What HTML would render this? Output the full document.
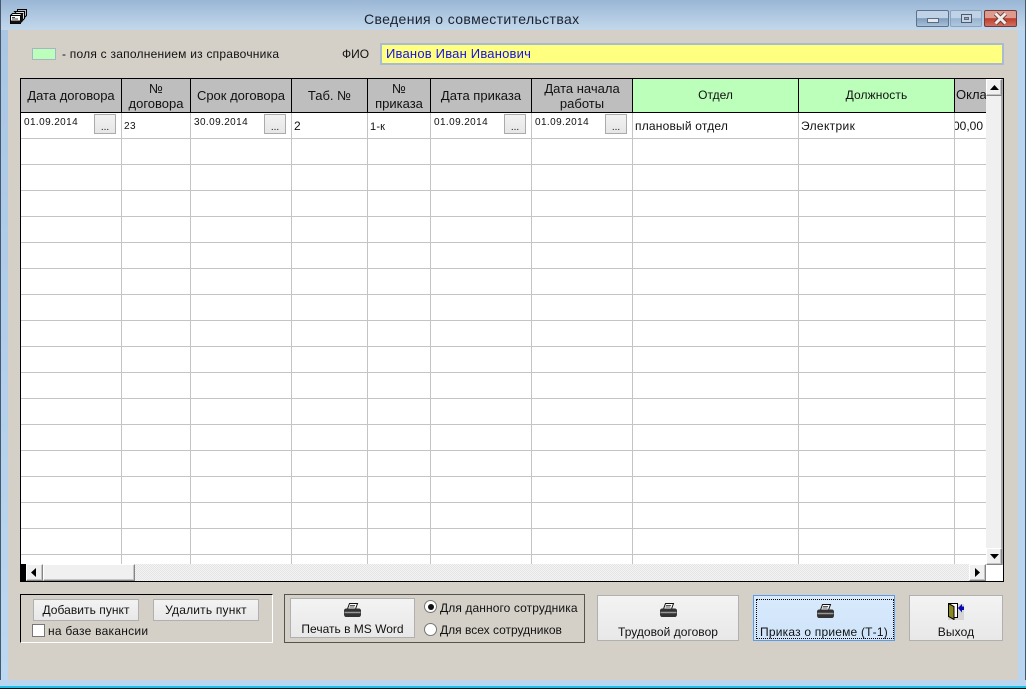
<!DOCTYPE html>
<html><head><meta charset="utf-8"><style>
html,body{margin:0;padding:0;background:#000}
#w{position:relative;width:1026px;height:689px;overflow:hidden;font-family:"Liberation Sans","Noto Sans CJK SC",sans-serif;font-size:12px;color:#111;background:#b9d3ec}
#w div,#w svg{position:absolute;box-sizing:border-box}
.t{white-space:nowrap;line-height:14px}
.h{background:#bebebe;border-right:1px solid #000;top:79px;height:34px;border-bottom:1px solid #000;text-align:center;line-height:14px;font-size:13px}
.g{background:#bbffbb;font-size:12px}
.vl{top:113px;height:451px;width:1px;background:#c4c4c4}
.hl{left:21px;width:965px;height:1px;background:#c4c4c4}
.btn{background:linear-gradient(#f3f3f3,#e8e8e8);border:1px solid #b0b0b0;text-align:center}
.d{font-size:10px;line-height:12px;white-space:nowrap;letter-spacing:.4px}
.dot{width:22px;height:20px;top:114px;background:linear-gradient(#f2f2f2,#e6e6e6);border:1px solid #ababab;text-align:center;font-size:10px;line-height:25px}
.sb{background:#f0f0f0;border:1px solid;border-color:#fff #858585 #858585 #fff;box-shadow:inset -1px -1px 0 #c4c4c4}
</style></head><body><div id="w">
<div style="left:0;top:0;width:1026px;height:30px;background:linear-gradient(#9ab6d6,#b3cbe3 60%,#c3d7ea)"></div>
<div style="left:0;top:30px;width:8px;height:656px;background:linear-gradient(#a9c6e4,#bcd8f2)"></div>
<div style="left:0;top:0;width:1px;height:689px;background:#45586c"></div>
<div style="left:1018px;top:30px;width:8px;height:656px;background:#b9d5ef"></div>
<div style="left:1025px;top:0;width:1px;height:689px;background:#45586c"></div>
<div style="left:0;top:680px;width:1026px;height:6px;background:#b9d5ef"></div>
<div style="left:0;top:686px;width:1026px;height:2px;background:#1cc0e8"></div>
<div style="left:0;top:688px;width:1026px;height:1px;background:#111"></div>
<div style="left:8px;top:30px;width:1010px;height:650px;background:#d4d0c8"></div>

<svg style="left:10px;top:9px" width="17" height="15" viewBox="0 0 17 15"><path d="M7.500 .5h9v6l-2 2V2.500h-7z" fill="#bbb" stroke="#000"/><path d="M4.500 2.500h10v7l-2 2z" fill="#ddd" stroke="#000"/><path d="M2.500 4.500h10l-2 2H.5z" fill="#eee" stroke="#000"/><rect x=".5" y="6.500" width="10" height="8" fill="#fff" stroke="#000"/><path d="M2 8.500h3M2 10h6" stroke="#444"/><rect x="1" y="11.500" width="10" height="3" fill="#111"/><path d="M10.500 6.500l2.500-2.500v8l-2.500 2.500z" fill="#111"/></svg>
<div class="t" style="left:364px;top:11px;font-size:14px;line-height:16px;color:#1a2230;letter-spacing:.38px">Сведения о совместительствах</div>

<div style="left:916px;top:10px;width:33px;height:17px;border:1px solid #5b728e;border-radius:2px;background:linear-gradient(#c0d2e6 45%,#7f9cbd 50%,#a8c0d8)"></div>
<div style="left:927px;top:18px;width:12px;height:5px;background:#e4e8ee;border:1px solid #5a6a80"></div>
<div style="left:950px;top:10px;width:32px;height:17px;border:1px solid #8ba3bf;border-radius:2px;background:linear-gradient(#bfd2e6 45%,#98b3d0 50%,#b0c8de)"></div>
<div style="left:961px;top:14px;width:11px;height:9px;background:#c8d4e2;border:1px solid #4c5c70"></div>
<div style="left:964px;top:17px;width:5px;height:3px;background:#8fa4bc;border:1px solid #5a6a80"></div>
<div style="left:984px;top:10px;width:33px;height:17px;border:1px solid #6e3a3a;border-radius:2px;background:linear-gradient(#df9a8e 45%,#be3c2c 50%,#cf7060)"></div>
<svg style="left:993px;top:12px" width="15" height="13" viewBox="0 0 15 13"><path d="M2.500 1.500l10 10M12.500 1.500l-10 10" stroke="#5c3030" stroke-width="4.500"/><path d="M2.500 1.500l10 10M12.500 1.500l-10 10" stroke="#f1ece8" stroke-width="3"/></svg>

<div style="left:32px;top:48px;width:24px;height:12px;background:#bbffbb;border:1px solid #a7b4c6"></div>
<div class="t" style="left:62px;top:47px;letter-spacing:.23px">- поля с заполнением из справочника</div>
<div class="t" style="left:342px;top:47px">ФИО</div>
<div class="t" style="left:380px;top:43px;width:624px;height:22px;background:#ffff80;border:2px solid #a9bbd0;color:#1414e6;padding-left:4px;line-height:17px;font-size:13px;letter-spacing:.2px">Иванов Иван Иванович</div>

<div style="left:20px;top:78px;width:984px;height:504px;background:#fff;border:1px solid #000"></div>
<div style="left:21px;width:101px" class="h"><div style="left:0;width:100px;top:10px">Дата договора</div></div>
<div style="left:122px;width:69px" class="h"><div style="left:0;width:68px;top:3px">№</div><div style="left:0;width:68px;top:18px">договора</div></div>
<div style="left:191px;width:101px" class="h"><div style="left:0;width:100px;top:10px">Срок договора</div></div>
<div style="left:292px;width:76px" class="h"><div style="left:0;width:75px;top:10px">Таб. №</div></div>
<div style="left:368px;width:63px" class="h"><div style="left:0;width:62px;top:3px">№</div><div style="left:0;width:62px;top:18px">приказа</div></div>
<div style="left:431px;width:101px" class="h"><div style="left:0;width:100px;top:10px">Дата приказа</div></div>
<div style="left:532px;width:101px" class="h"><div style="left:0;width:100px;top:3px">Дата начала</div><div style="left:0;width:100px;top:18px">работы</div></div>
<div style="left:633px;width:166px" class="h g"><div style="left:0;width:165px;top:9px">Отдел</div></div>
<div style="left:799px;width:156px" class="h g"><div style="left:0;width:155px;top:9px;letter-spacing:.1px">Должность</div></div>
<div style="left:955px;width:32px;text-align:left;overflow:hidden" class="h"><div style="left:1px;top:9px">Оклад</div></div>

<div class="vl" style="left:121px"></div><div class="vl" style="left:190px"></div><div class="vl" style="left:291px"></div><div class="vl" style="left:367px"></div><div class="vl" style="left:430px"></div><div class="vl" style="left:531px"></div><div class="vl" style="left:632px"></div><div class="vl" style="left:798px"></div><div class="vl" style="left:954px"></div>
<div class="hl" style="top:138px"></div><div class="hl" style="top:164px"></div><div class="hl" style="top:190px"></div><div class="hl" style="top:216px"></div><div class="hl" style="top:242px"></div><div class="hl" style="top:268px"></div><div class="hl" style="top:294px"></div><div class="hl" style="top:320px"></div><div class="hl" style="top:346px"></div><div class="hl" style="top:372px"></div><div class="hl" style="top:398px"></div><div class="hl" style="top:424px"></div><div class="hl" style="top:450px"></div><div class="hl" style="top:476px"></div><div class="hl" style="top:502px"></div><div class="hl" style="top:528px"></div><div class="hl" style="top:554px"></div>

<div class="d" style="left:24px;top:117px">01.09.2014</div><div class="dot" style="left:94px">...</div>
<div class="d" style="left:124px;top:121px;letter-spacing:.5px">23</div>
<div class="d" style="left:194px;top:117px">30.09.2014</div><div class="dot" style="left:264px">...</div>
<div class="t" style="left:294px;top:119px;font-size:12px">2</div>
<div class="d" style="left:370px;top:121px;font-size:11px;letter-spacing:.2px">1-к</div>
<div class="d" style="left:434px;top:117px">01.09.2014</div><div class="dot" style="left:504px">...</div>
<div class="d" style="left:535px;top:117px">01.09.2014</div><div class="dot" style="left:605px">...</div>
<div class="t" style="left:635px;top:119px;letter-spacing:.2px">плановый отдел</div>
<div class="t" style="left:801px;top:119px;letter-spacing:.35px">Электрик</div>
<div style="left:955px;top:119px;width:31px;height:14px;overflow:hidden"><div class="t" style="right:3px;top:0">100,00</div></div>

<div style="left:986px;top:79px;width:15px;height:477px;background:#f0f0f0"></div>
<div style="left:1001px;top:79px;width:2px;height:486px;background:#a8a8a8"></div>
<div class="sb" style="left:986px;top:79px;width:16px;height:17px"></div>
<svg style="left:990px;top:85px" width="9" height="5"><path d="M4.500 0L9 5H0z" fill="#000"/></svg>
<div class="sb" style="left:986px;top:548px;width:16px;height:17px"></div>
<svg style="left:990px;top:554px" width="9" height="5"><path d="M0 0h9L4.500 5z" fill="#000"/></svg>

<div style="left:21px;top:564px;width:5px;height:17px;background:#000"></div>
<div style="left:26px;top:564px;width:960px;height:17px;background:repeating-conic-gradient(#f4f4f4 0 25%,#e4e4e4 0 50%) 0 0/2px 2px"></div>
<div class="sb" style="left:26px;top:564px;width:17px;height:17px"></div>
<svg style="left:31px;top:568px" width="5" height="9"><path d="M5 0v9L0 4.500z" fill="#000"/></svg>
<div class="sb" style="left:43px;top:564px;width:92px;height:17px"></div>
<div class="sb" style="left:969px;top:564px;width:17px;height:17px"></div>
<svg style="left:975px;top:568px" width="5" height="9"><path d="M0 0l5 4.500L0 9z" fill="#000"/></svg>

<div style="left:20px;top:594px;width:253px;height:49px;border:1px solid;border-color:#000 #fff #fff #000"></div>
<div class="btn t" style="left:33px;top:599px;width:106px;height:22px;line-height:21px;letter-spacing:.05px">Добавить пункт</div>
<div class="btn t" style="left:153px;top:599px;width:106px;height:22px;line-height:21px;letter-spacing:.2px">Удалить пункт</div>
<div style="left:32px;top:624px;width:13px;height:13px;background:#fff;border:1px solid #777"></div>
<div class="t" style="left:48px;top:624px;letter-spacing:.25px">на базе вакансии</div>

<div style="left:284px;top:594px;width:301px;height:49px;border:1px solid #55534e"></div>
<div class="btn t" style="left:290px;top:598px;width:125px;height:40px;padding-top:23px">Печать в MS Word</div>
<svg style="left:344px;top:603px" width="17" height="15" viewBox="0 0 17 15"><path d="M5.500 .5h8l-2 5.500h-8z" fill="#fff" stroke="#111"/><path d="M6 2.500h5M5.500 4h5" stroke="#555"/><path d="M2 5.500h13c1 0 2 1 2 2v4c0 1.500-1 2.500-2 2.500H2c-1 0-2-1-2-2.500v-4c0-1 1-2 2-2z" fill="#333"/><path d="M.5 9.500h16" stroke="#999" stroke-width="1.500"/></svg>
<div style="left:424px;top:600px;width:13px;height:13px;border-radius:50%;background:#fff;border:1px solid #777"></div>
<div style="left:428px;top:604px;width:6px;height:6px;border-radius:50%;background:#111"></div>
<div class="t" style="left:440px;top:601px;letter-spacing:.1px">Для данного сотрудника</div>
<div style="left:424px;top:623px;width:13px;height:13px;border-radius:50%;background:#fff;border:1px solid #777"></div>
<div class="t" style="left:440px;top:623px">Для всех сотрудников</div>

<div class="btn t" style="left:597px;top:595px;width:142px;height:46px;padding-top:29px;letter-spacing:.03px">Трудовой договор</div>
<svg style="left:660px;top:603px" width="17" height="15" viewBox="0 0 17 15"><path d="M5.500 .5h8l-2 5.500h-8z" fill="#fff" stroke="#111"/><path d="M6 2.500h5M5.500 4h5" stroke="#555"/><path d="M2 5.500h13c1 0 2 1 2 2v4c0 1.500-1 2.500-2 2.500H2c-1 0-2-1-2-2.500v-4c0-1 1-2 2-2z" fill="#333"/><path d="M.5 9.500h16" stroke="#999" stroke-width="1.500"/></svg>

<div class="t" style="left:753px;top:595px;width:142px;height:46px;background:linear-gradient(#d8eafc,#cfe4fa);border:1px solid #5c9ce0;text-align:center;padding-top:29px;letter-spacing:.2px">Приказ о приеме (Т-1)</div>
<div style="left:756px;top:599px;width:138px;height:40px;border:1px dotted #000"></div>
<svg style="left:817px;top:604px" width="17" height="15" viewBox="0 0 17 15"><path d="M5.500 .5h8l-2 5.500h-8z" fill="#fff" stroke="#111"/><path d="M6 2.500h5M5.500 4h5" stroke="#555"/><path d="M2 5.500h13c1 0 2 1 2 2v4c0 1.500-1 2.500-2 2.500H2c-1 0-2-1-2-2.500v-4c0-1 1-2 2-2z" fill="#333"/><path d="M.5 9.500h16" stroke="#999" stroke-width="1.500"/></svg>

<div class="btn t" style="left:909px;top:595px;width:94px;height:46px;padding-top:29px;letter-spacing:.1px">Выход</div>
<svg style="left:948px;top:603px" width="16" height="17" viewBox="0 0 16 17"><rect x="0" y="1" width="16" height="16" fill="#c4c4c4" opacity=".6"/><path d="M.5 .5h9v14H6" fill="#fff" stroke="#000"/><path d="M.5 .5l5.500 3v13l-5.500-3z" fill="#8a8a20" stroke="#000"/><path d="M10 5l4-4v2.500h2v3.500h-2v2.500z" fill="#0a0ab4"/></svg>
</div></body></html>
